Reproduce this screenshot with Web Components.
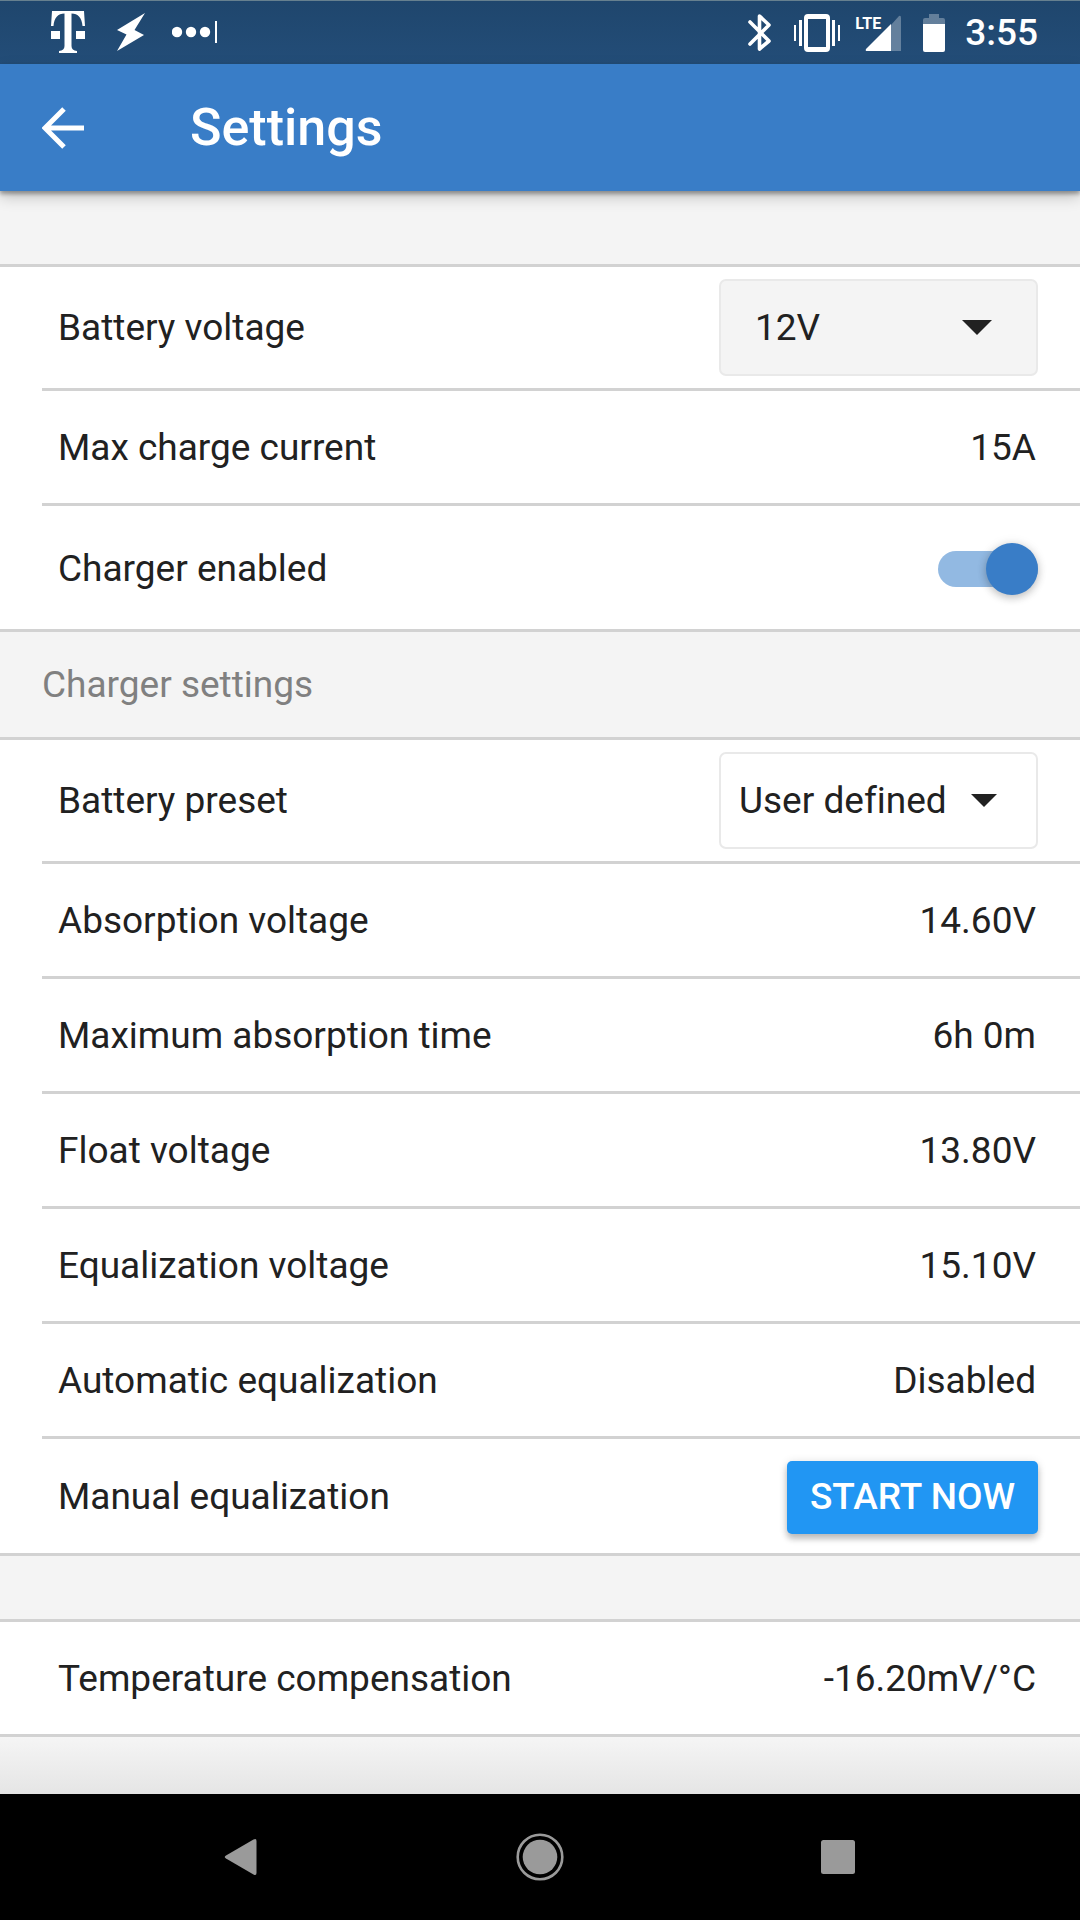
<!DOCTYPE html>
<html lang="en">
<head>
<meta charset="utf-8">
<meta name="viewport" content="width=device-width, initial-scale=1">
<title>Settings</title>
<style>
  html, body { margin: 0; }
  body {
    --surface: #f4f4f4;
    --line: #d2d2d2;
    --primary: #397dc7;
    --ink: #212121;
    background: var(--surface);
    color: var(--ink);
    font-family: Roboto, "Liberation Sans", sans-serif;
    font-size: 37px;
    line-height: 44px;
    font-variant-ligatures: none;
  }
</style>
</head>
<body>
<app-screen>
  <status-bar slot="top" time="3:55" network="LTE"></status-bar>
  <app-bar slot="top">Settings</app-bar>

  <settings-group>
    <setting-select kind="filled" options="12V,24V">Battery voltage</setting-select>
    <setting-row value="15A">Max charge current</setting-row>
    <setting-switch checked>Charger enabled</setting-switch>
  </settings-group>

  <settings-heading>Charger settings</settings-heading>

  <settings-group>
    <setting-select kind="outlined" options="User defined,Normal,High">Battery preset</setting-select>
    <setting-row value="14.60V">Absorption voltage</setting-row>
    <setting-row value="6h 0m">Maximum absorption time</setting-row>
    <setting-row value="13.80V">Float voltage</setting-row>
    <setting-row value="15.10V">Equalization voltage</setting-row>
    <setting-row value="Disabled">Automatic equalization</setting-row>
    <setting-action action="START NOW">Manual equalization</setting-action>
  </settings-group>

  <settings-gap></settings-gap>

  <settings-group>
    <setting-row value="-16.20mV/°C">Temperature compensation</setting-row>
  </settings-group>

  <nav-bar slot="bottom"></nav-bar>
</app-screen>

<script>
  class BaseElement extends HTMLElement {
    connectedCallback() {
      if (this.shadowRoot) return;
      this.attachShadow({ mode: "open" }).innerHTML =
        `<style>*{box-sizing:border-box}:host{display:block}${this.styles()}</style>${this.markup()}`;
    }
    styles() { return ""; }
    markup() { return "<slot></slot>"; }
  }

  class AppScreen extends BaseElement {
    styles() {
      return `
        :host { display: flex; flex-direction: column; min-height: 100vh; }
        header { position: relative; z-index: 1; }
        main { padding-top: 73px; }
        .fade { flex: 1; min-height: 24px; background: linear-gradient(#f5f5f5, #e5e5e5); }`;
    }
    markup() {
      return `
        <header><slot name="top"></slot></header>
        <main><slot></slot></main>
        <div class="fade"></div>
        <slot name="bottom"></slot>`;
    }
  }

  class StatusBar extends BaseElement {
    styles() {
      return `
        :host {
          display: flex; justify-content: space-between; align-items: center;
          height: 63px; padding: 0 42px 0 50px; color: #fff;
          background: linear-gradient(#1f466d, #234d78);
          border-top: 1px solid #66808f;
        }
        div { display: flex; align-items: center; }
        .left { gap: 26px; padding-bottom: 2px; }
        svg { display: block; fill: #fff; }
        .bt { margin-right: 20px; }
        .vib { margin-right: 14px; }
        .cell { display: flex; margin-right: 22px; }
        .net {
          align-self: flex-start; margin-right: -16px;
          font: bold 16px/20px "Liberation Sans Narrow", Roboto, sans-serif;
        }
        .bat { margin-right: 20px; }
        time { font-weight: 500; }`;
    }
    markup() {
      return `
        <div class="left">
          <svg width="40" height="44" viewBox="0 0 40 44" aria-label="Carrier">
            <path d="M2 1H34L35 16H32.500C32 8 28 3.500 21.500 3.500V36Q21.500 40.500 27 41V43H9V41Q14.500 40.500 14.500 36V3.500C8 3.500 4 8 3.500 16H1Z"/>
            <path d="M1 21H10V29H1ZM26 21H35V29H26Z"/>
          </svg>
          <svg width="30" height="40" viewBox="0 0 30 40" aria-label="Flash"><path d="M29 1 1 18 10.500 22.500 1 39 28 23 18.500 18Z"/></svg>
          <svg width="46" height="24" viewBox="0 0 46 24" aria-label="More">
            <circle cx="5" cy="12" r="5.200"/><circle cx="19" cy="12" r="5.200"/><circle cx="33" cy="12" r="5.200"/><path d="M43 1h2v22h-2z"/>
          </svg>
        </div>
        <div>
          <svg class="bt" width="26" height="40" viewBox="0 0 26 40" aria-label="Bluetooth">
            <path d="M3 9 22 28 12.500 36V3L22 12 3 31" fill="none" stroke="#fff" stroke-width="3.600" stroke-linejoin="round" stroke-linecap="round"/>
          </svg>
          <svg class="vib" width="48" height="40" viewBox="0 0 48 40" aria-label="Vibrate">
            <path fill-rule="evenodd" d="M15 1H33Q37 1 37 5V35Q37 39 33 39H15Q11 39 11 35V5Q11 1 15 1ZM15 6V34H33V6Z"/>
            <path d="M1 12h2v16h-2zM6 7h3v26h-3zM39 7h3v26h-3zM45 12h2v16h-2z"/>
          </svg>
          <span class="cell">
            <span class="net">${this.getAttribute("network")}</span>
            <svg width="36" height="38" viewBox="0 0 36 38" aria-label="Signal">
              <path d="M26 11 34 2Q36 1 36 4V37H26Z" opacity=".3"/><path d="M26 10V37H2Q0 37 1 35Z"/>
            </svg>
          </span>
          <svg class="bat" width="22" height="38" viewBox="0 0 22 38" aria-label="Battery">
            <path d="M6 0H16V4H20Q22 4 22 6V10H0V6Q0 4 2 4H6Z" opacity=".3"/><path d="M0 10H22V36Q22 38 20 38H2Q0 38 0 36Z"/>
          </svg>
          <time>${this.getAttribute("time")}</time>
        </div>`;
    }
  }

  class AppBar extends BaseElement {
    styles() {
      return `
        :host {
          display: flex; align-items: center; gap: 106px;
          height: 127px; padding: 0 42px; color: #fff; background: var(--primary);
          box-shadow: 0 3px 4px rgba(0,0,0,.32), 0 6px 14px rgba(0,0,0,.2);
        }
        button { display: block; padding: 0; border: 0; background: none; }
        svg { display: block; }
        h1 { margin: 0; font-size: 52px; line-height: 60px; font-weight: 500; }`;
    }
    markup() {
      return `
        <button aria-label="Back">
          <svg width="42" height="42" viewBox="0 0 42 42" fill="none" stroke="#fff" stroke-width="5"><path d="M42 21H5M22 2 3 21 22 40"/></svg>
        </button>
        <h1><slot></slot></h1>`;
    }
  }

  class SettingsGroup extends BaseElement {
    styles() {
      return `
        :host { background: #fff; border: solid var(--line); border-width: 3px 0; }
        ::slotted(:last-child) { --divider: 0px; }`;
    }
  }

  class SettingsHeading extends BaseElement {
    styles() {
      return `
        :host { padding: 31px 42px 30px; color: #808080; }
        h2 { margin: 0; font: inherit; }`;
    }
    markup() { return "<h2><slot></slot></h2>"; }
  }

  class SettingsGap extends BaseElement {
    styles() { return ":host { height: 63px; }"; }
  }

  class SettingRow extends BaseElement {
    styles() {
      return `
        :host { padding-left: 42px; }
        .row {
          display: flex; align-items: center; justify-content: space-between; gap: 24px;
          min-height: 110px; padding: 2px 42px 0 16px;
          box-sizing: content-box;
          border-bottom: var(--divider, 3px) solid var(--line);
        }
        output { padding-right: 2px; }
        ${this.controlStyles()}`;
    }
    markup() { return `<div class="row">${this.label()}${this.control()}</div>`; }
    label() { return `<label for="control"><slot></slot></label>`; }
    controlStyles() { return ""; }
    control() { return `<output id="control">${this.getAttribute("value")}</output>`; }
  }

  class SettingSelect extends SettingRow {
    controlStyles() {
      return `
        .row { min-height: 121px; padding-top: 0; }
        .field { display: grid; align-items: center; width: 319px; }
        .field > * { grid-area: 1 / 1; }
        select {
          appearance: none; width: 100%; height: 97px; margin: 0; padding: 0 34px;
          border: 2px solid #e9e9e9; border-radius: 7px; background: var(--surface);
          color: inherit; font: inherit;
        }
        svg { justify-self: end; margin-right: 46px; fill: var(--ink); pointer-events: none; }
        :host([kind="outlined"]) select { padding: 0 18px; background: #fff; }
        :host([kind="outlined"]) svg { width: 26px; height: 13px; margin-right: 41px; }`;
    }
    control() {
      const options = this.getAttribute("options").split(",").map(o => `<option>${o}</option>`).join("");
      return `
        <span class="field">
          <select id="control">${options}</select>
          <svg width="30" height="15" viewBox="0 0 30 15"><path d="M0 0H30L15 15Z"/></svg>
        </span>`;
    }
  }

  class SettingSwitch extends SettingRow {
    controlStyles() {
      return `
        .row { min-height: 121px; }
        input {
          appearance: none; display: flex; align-items: center; justify-content: flex-end;
          width: 100px; height: 36px; margin: 0; border-radius: 18px; background: #92b9e2;
        }
        input::before {
          content: ""; width: 52px; height: 52px; flex: none; border-radius: 50%;
          background: var(--primary);
          box-shadow: 0 3px 8px rgba(0,0,0,.22), 0 0 12px rgba(0,0,0,.08);
        }
        input:not(:checked) { justify-content: flex-start; background: #b9b9b9; }`;
    }
    control() { return `<input id="control" type="checkbox" role="switch" ${this.hasAttribute("checked") ? "checked" : ""}>`; }
  }

  class SettingAction extends SettingRow {
    controlStyles() {
      return `
        .row { min-height: 112px; }
        button {
          height: 73px; padding: 0 23px; border: 0; border-radius: 5px;
          background: #2196f3; color: #fff; font: inherit; font-weight: 500;
          box-shadow: 0 5px 6px rgba(0,0,0,.22), 0 1px 10px rgba(0,0,0,.12);
        }`;
    }
    label() { return `<span id="name"><slot></slot></span>`; }
    control() { return `<button aria-describedby="name">${this.getAttribute("action")}</button>`; }
  }

  class NavBar extends BaseElement {
    styles() {
      return `
        nav { display: flex; justify-content: center; gap: 248px; height: 126px; align-items: center; background: #000; }
        button { display: block; padding: 0; border: 0; background: none; }
        svg { display: block; fill: #9a9a9a; }`;
    }
    markup() {
      return `
        <nav>
          <button aria-label="Back"><svg width="50" height="50" viewBox="0 0 50 50"><path d="M9 23.500 36.500 7.500Q39.500 6 39.500 9V41Q39.500 44 36.500 42.500L9 26.500Q6.500 25 9 23.500Z"/></svg></button>
          <button aria-label="Home"><svg width="50" height="50" viewBox="0 0 50 50"><circle cx="25" cy="25" r="22.300" fill="none" stroke="#9a9a9a" stroke-width="2.600"/><circle cx="25" cy="25" r="17.300"/></svg></button>
          <button aria-label="Overview"><svg width="50" height="50" viewBox="0 0 50 50"><rect x="8" y="8" width="34" height="34" rx="2.500"/></svg></button>
        </nav>`;
    }
  }

  customElements.define("app-screen", AppScreen);
  customElements.define("status-bar", StatusBar);
  customElements.define("app-bar", AppBar);
  customElements.define("settings-group", SettingsGroup);
  customElements.define("settings-heading", SettingsHeading);
  customElements.define("settings-gap", SettingsGap);
  customElements.define("setting-row", SettingRow);
  customElements.define("setting-select", SettingSelect);
  customElements.define("setting-switch", SettingSwitch);
  customElements.define("setting-action", SettingAction);
  customElements.define("nav-bar", NavBar);
</script>
</body>
</html>
